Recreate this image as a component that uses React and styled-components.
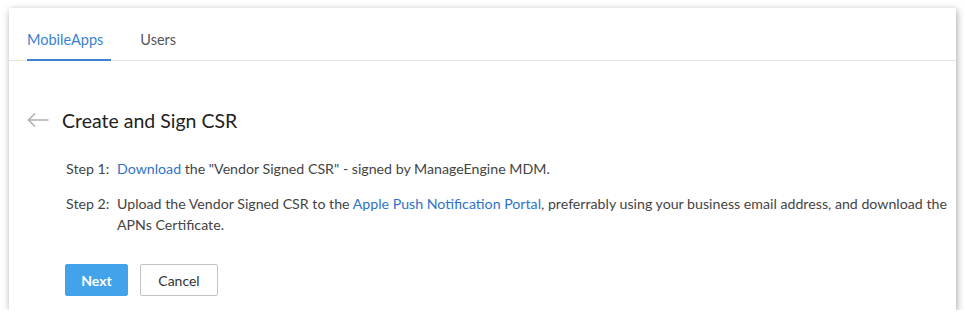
import styled, { createGlobalStyle } from 'styled-components'

const GlobalStyle = createGlobalStyle`
  body {
    margin: 0;
    background: #fff;
    font-family: Lato, "Open Sans", Arial, sans-serif;
  }
`

function BackArrow() {
  return (
    <svg width="22" height="14" viewBox="0 0 22 14" fill="none" stroke="#aaa" strokeWidth="1.4">
      <path d="M21.5 7H1.5" />
      <path d="M8 0.5L1.5 7l6.5 6.5" />
    </svg>
  )
}

function App() {
  return (
    <>
      <GlobalStyle />
      <Card>
        <TabBar>
          <Tab $active>MobileApps</Tab>
          <Tab>Users</Tab>
        </TabBar>

        <Body>
          <Heading>
            <BackArrow />
            <h2>Create and Sign CSR</h2>
          </Heading>

          <Steps>
            <Step>
              <StepLabel>Step 1:</StepLabel>
              <StepText>
                <Link href="#">Download</Link> the "Vendor Signed CSR" - signed by ManageEngine MDM.
              </StepText>
            </Step>
            <Step>
              <StepLabel>Step 2:</StepLabel>
              <StepText>
                Upload the Vendor Signed CSR to the <Link href="#">Apple Push Notification Portal</Link>, preferrably using your business email address, and download the APNs Certificate.
              </StepText>
            </Step>
          </Steps>

          <Actions>
            <Button $primary>Next</Button>
            <Button>Cancel</Button>
          </Actions>
        </Body>
      </Card>
    </>
  )
}

export default App

/////  Style  /////

const Card = styled.div`
  margin: 8px 9px 0;
  width: 947px;
  height: 302px;
  background: #fff;
  box-shadow: 1px 2px 7px rgba(0, 0, 0, 0.35);
  box-sizing: border-box;
`

const TabBar = styled.div`
  display: flex;
  gap: 29px;
  padding: 0 18px;
  height: 53px;
  border-bottom: 1px solid #e3e3e3;
  box-sizing: border-box;
`

const Tab = styled.div`
  display: flex;
  align-items: flex-end;
  padding: 0 8px 11px 0;
  margin-bottom: -1px;
  font-size: 14.5px;
  color: ${p => (p.$active ? '#3b82d0' : '#555')};
  border-bottom: 2px solid ${p => (p.$active ? '#3b82d0' : 'transparent')};
  cursor: pointer;
`

const Body = styled.div`
  padding: 0 9px 0 18px;
`

const Heading = styled.div`
  display: flex;
  align-items: center;
  gap: 13px;
  margin-top: 47px;
  height: 24px;

  & h2 {
    margin: 0;
    font-size: 19.5px;
    font-weight: 400;
    color: #222;
  }
`

const Steps = styled.div`
  display: flex;
  flex-direction: column;
  gap: 14px;
  margin-top: 26px;
  padding-left: 39px;
`

const Step = styled.div`
  display: flex;
  font-size: 14.2px;
  line-height: 21px;
  color: #444;
`

const StepLabel = styled.span`
  flex: 0 0 51px;
`

const StepText = styled.span`
  flex: 1;
`

const Link = styled.a`
  color: #2f73c9;
  text-decoration: none;
`

const Actions = styled.div`
  display: flex;
  gap: 12px;
  margin-top: 29px;
  padding-left: 38px;
`

const Button = styled.button`
  height: 32px;
  padding: 0;
  width: ${p => (p.$primary ? '63px' : '78px')};
  font-family: inherit;
  font-size: 14px;
  font-weight: ${p => (p.$primary ? 700 : 400)};
  color: ${p => (p.$primary ? '#fff' : '#333')};
  background: ${p => (p.$primary ? '#43a3ea' : '#fff')};
  border: 1px solid ${p => (p.$primary ? '#43a3ea' : '#c4c4c4')};
  border-radius: 2px;
  cursor: pointer;
`
